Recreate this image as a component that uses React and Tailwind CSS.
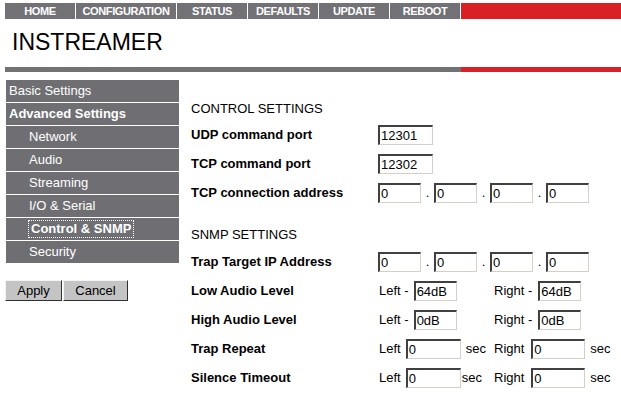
import React from "react";

const navItems = [
  { label: "HOME", w: "w-[70px]" },
  { label: "CONFIGURATION", w: "w-[100px]" },
  { label: "STATUS", w: "w-[70px]" },
  { label: "DEFAULTS", w: "w-[70px]" },
  { label: "UPDATE", w: "w-[70px]" },
  { label: "REBOOT", w: "w-[70px]" },
];

const menu = [
  { label: "Basic Settings", level: 0 },
  { label: "Advanced Settings", level: 0, bold: true },
  { label: "Network", level: 1 },
  { label: "Audio", level: 1 },
  { label: "Streaming", level: 1 },
  { label: "I/O & Serial", level: 1 },
  { label: "Control & SNMP", level: 1, active: true },
  { label: "Security", level: 1 },
];

const inputCls =
  "h-[20px] px-[1px] text-[13px] leading-[16px] text-black bg-white border-solid border-t-2 border-l-2 border-r border-b border-t-[#404040] border-l-[#404040] border-r-[#d4d0c8] border-b-[#d4d0c8] outline-none";

const Field = ({ value, w, className = "" }) => (
  <input
    type="text"
    defaultValue={value}
    className={`${inputCls} ${w} ${className}`}
  />
);

const IpField = () => (
  <div className="flex items-center">
    {[0, 1, 2, 3].map((i) => (
      <React.Fragment key={i}>
        {i > 0 && <span className="w-[13px] text-center text-[13px]">.</span>}
        <Field value="0" w="w-[43px]" />
      </React.Fragment>
    ))}
  </div>
);

const Row = ({ label, children }) => (
  <div className="flex items-center h-[29px]">
    <div className="w-[187px] text-[13px] font-bold">{label}</div>
    {children}
  </div>
);

const LevelRow = ({ label, left, right }) => (
  <Row label={label}>
    <div className="flex items-center w-[116px] text-[13px]">
      <span className="ml-[1px]">Left -</span>
      <Field value={left} w="w-[43px]" className="ml-[5px]" />
    </div>
    <div className="flex items-center text-[13px]">
      <span>Right -</span>
      <Field value={right} w="w-[43px]" className="ml-[6px]" />
    </div>
  </Row>
);

const TimeRow = ({ label, secGap }) => (
  <Row label={label}>
    <div className="flex items-center w-[116px] text-[13px]">
      <span className="ml-[1px]">Left</span>
      <Field value="0" w="w-[55px]" className="ml-[5px]" />
      <span className={secGap}>sec</span>
    </div>
    <div className="flex items-center text-[13px]">
      <span>Right</span>
      <Field value="0" w="w-[54px]" className="ml-[7px]" />
      <span className="ml-[5px]">sec</span>
    </div>
  </Row>
);

export default function App() {
  return (
    <div className="w-[621px] h-[411px] overflow-hidden bg-white text-black font-['Liberation_Sans',Arial,sans-serif]">
      {/* top navigation */}
      <div className="flex mt-[3px] ml-[5px] h-[16px]">
        {navItems.map((item) => (
          <div
            key={item.label}
            className={`${item.w} box-content border-r border-white bg-[#727276] text-white text-[11px] font-bold tracking-[-0.4px] leading-[16px] text-center`}
          >
            {item.label}
          </div>
        ))}
        <div className="flex-1 bg-[#d92027]" />
      </div>

      <div className="h-[48px] pl-[12px] pt-[12px] text-[23px] leading-[23px]">
        INSTREAMER
      </div>

      <div className="flex ml-[5px] h-[5px]">
        <div className="w-[456px] bg-[#727276]" />
        <div className="flex-1 bg-[#d92027]" />
      </div>

      <div className="flex ml-[5px] mt-[8px]">
        {/* side menu */}
        <div className="w-[174px]">
          <div className="ml-[1px] w-[173px] flex flex-col gap-px">
            {menu.map((m) => (
              <div
                key={m.label}
                className={`h-[22px] flex items-center bg-[#6f6f73] text-white text-[13px] ${
                  m.level ? "pl-[23px]" : "pl-[3px]"
                } ${m.bold || m.active ? "font-bold" : ""}`}
              >
                {m.active ? (
                  <span className="inline-block px-[2px] leading-[16px] outline-1 outline-dotted outline-white">
                    {m.label}
                  </span>
                ) : (
                  m.label
                )}
              </div>
            ))}
          </div>
          <div className="flex gap-px mt-[17px]">
            <button className="w-[57px] h-[21px] bg-[#c4c4c4] text-[13px] text-black border-solid border border-t-[#f4f4f4] border-l-[#f4f4f4] border-r-[#303030] border-b-[#303030]">
              Apply
            </button>
            <button className="w-[65px] h-[21px] bg-[#c4c4c4] text-[13px] text-black border-solid border border-t-[#f4f4f4] border-l-[#f4f4f4] border-r-[#303030] border-b-[#303030]">
              Cancel
            </button>
          </div>
        </div>

        {/* settings form */}
        <div className="ml-[12px] pt-[19px]">
          <div className="h-[20px] flex items-center text-[13px]">
            CONTROL SETTINGS
          </div>
          <div className="mt-px">
            <Row label="UDP command port">
              <Field value="12301" w="w-[55px]" />
            </Row>
            <Row label="TCP command port">
              <Field value="12302" w="w-[55px]" />
            </Row>
            <Row label="TCP connection address">
              <IpField />
            </Row>
          </div>

          <div className="h-[20px] mt-[18px] flex items-center text-[13px]">
            SNMP SETTINGS
          </div>
          <div className="mt-[2px]">
            <Row label="Trap Target IP Address">
              <IpField />
            </Row>
            <LevelRow label="Low Audio Level" left="64dB" right="64dB" />
            <LevelRow label="High Audio Level" left="0dB" right="0dB" />
            <TimeRow label="Trap Repeat" secGap="ml-[5px]" />
            <TimeRow label="Silence Timeout" secGap="ml-[1px]" />
          </div>
        </div>
      </div>
    </div>
  );
}
